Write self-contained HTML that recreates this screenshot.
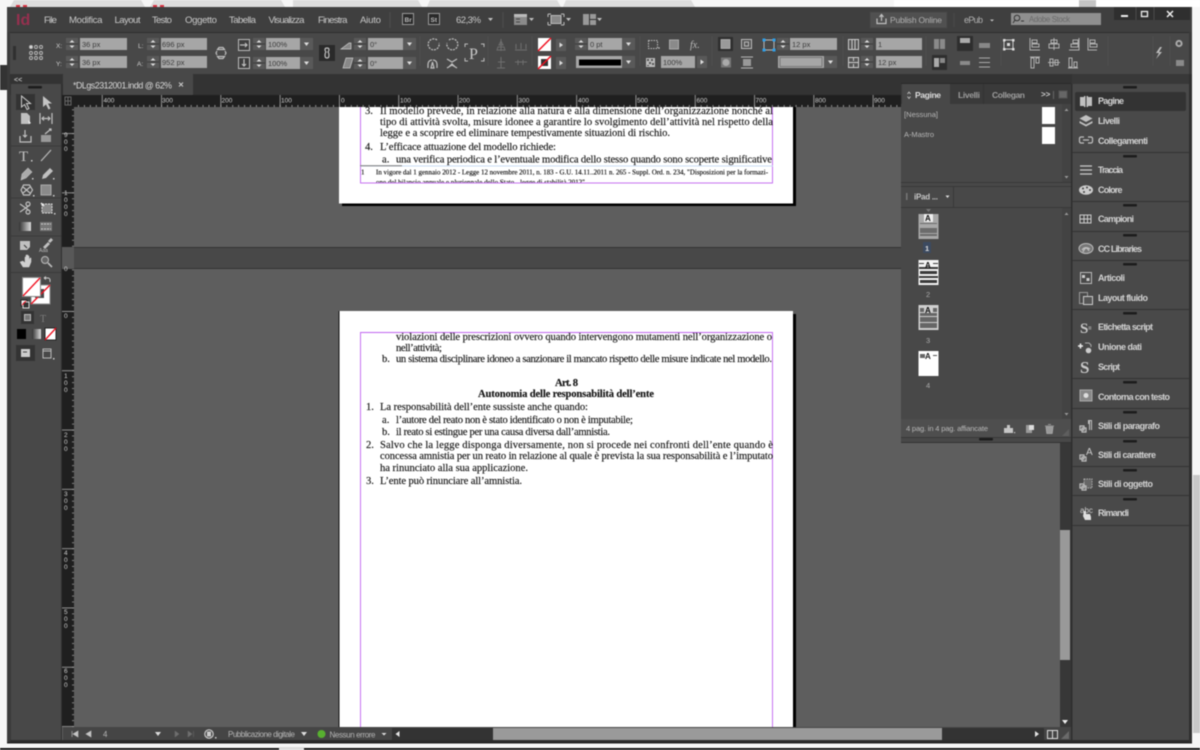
<!DOCTYPE html>
<html lang="it"><head><meta charset="utf-8"><title>InDesign</title>
<style>
html,body{margin:0;padding:0;background:#f6f6f6;width:1200px;height:750px;overflow:hidden}
svg{display:block}
#root{filter:blur(.4px)}
text{font-family:"Liberation Sans",sans-serif;white-space:pre}
.m{font-size:9.6px;fill:#c8c8c8}
.c{font-size:7.5px;fill:#3c3c3c}
.d{font-size:9px;fill:#d2d2d2;font-weight:bold}
.r{font-size:6.5px;fill:#cfcfcf}
.s{font-size:8px;fill:#b4b4b4}
.p{font-family:"Liberation Serif",serif;font-size:10.6px;fill:#141414;stroke:#141414;stroke-width:.14}
.b{font-weight:bold}
.f{font-family:"Liberation Serif",serif;font-size:6.9px;fill:#000;stroke:#000;stroke-width:.12}
.i{fill:none;stroke:#c0c0c0;stroke-width:1.2}
.j{fill:#c0c0c0}
</style></head><body>
<svg id="root" width="1200" height="750" viewBox="0 0 1200 750" xmlns="http://www.w3.org/2000/svg">
<defs>
<g id="sp"><rect width="12" height="12" fill="#595959"/><path d="M0 6h12" stroke="#3c3c3c"/><path d="M3.500 4.500L6 2l2.500 2.500zM3.500 7.500L6 10l2.500-2.500z" fill="#ddd"/></g>
<g id="dr"><rect width="13" height="12" fill="#595959"/><path d="M4 4.500h5L6.500 8z" fill="#ddd"/></g>
<g id="ar"><rect width="10" height="12" fill="#595959"/><path d="M3.500 3.500L7 6 3.500 8.500z" fill="#ddd"/></g>
<g id="gr"><rect width="14" height="2.500" rx="1" fill="#1c1c1c"/></g>
<pattern id="hr" x="339" y="95" width="5.930" height="12" patternUnits="userSpaceOnUse"><rect x="0" y="10" width=".8" height="2" fill="#aaa"/></pattern>
<pattern id="hR" x="339" y="95" width="59.300" height="12" patternUnits="userSpaceOnUse"><rect x="0" y="0" width=".8" height="12" fill="#aaa"/></pattern>
<pattern id="vr" x="62" y="311" width="12" height="5.930" patternUnits="userSpaceOnUse"><rect x="10" y="0" width="2" height=".8" fill="#999"/></pattern>
<pattern id="vR" x="62" y="311" width="12" height="59.300" patternUnits="userSpaceOnUse"><rect x="0" y="0" width="12" height=".8" fill="#aaa"/></pattern>
<linearGradient id="g1"><stop offset="0" stop-color="#333"/><stop offset="1" stop-color="#ddd"/></linearGradient>
</defs>

<!-- outside -->
<rect width="1200" height="750" fill="#f6f6f6"/>
<rect x="894" y="0" width="306" height="7" fill="#fff"/>
<path d="M10 7l4-7h127l4 7zM150 7l4-7h127l4 7zM293 7l0-7h125l4 7zM427 7l3-7h127l4 7zM563 7l3-7h125l4 7z" fill="#dcdcdc"/>
<path d="M16 5h4v2h-4zM23 5h4v2h-4zM153 5h4v2h-4zM160 5h4v2h-4z" fill="#d83040"/>
<rect x="1079" y="0" width="17" height="7" fill="#c4c4c4"/>
<rect x="0" y="65" width="7" height="25" fill="#333"/>
<rect x="1193" y="475" width="7" height="258" fill="#c8c8c8"/>
<rect x="0" y="748" width="1200" height="2" fill="#111"/>
<rect x="279" y="747" width="25" height="3" fill="#ddd"/>

<!-- window -->
<rect x="7" y="7" width="1185" height="736" fill="#3a3a3a"/>
<rect x="7" y="742" width="1185" height="1.500" fill="#222"/>
<rect x="7" y="7" width="1185" height="25" fill="#3f3f3f"/>
<rect x="10" y="32" width="1179" height="42" fill="#484848"/>
<rect x="10" y="32" width="1179" height="1" fill="#2e2e2e"/>
<rect x="10" y="74" width="1179" height="21" fill="#333"/>

<!-- menu -->
<text x="16" y="25" style="font-size:16px;fill:#96304f;font-weight:bold">Id</text>
<text class="m" x="44" y="23" textLength="13">File</text>
<text class="m" x="69" y="23" textLength="33.500">Modifica</text>
<text class="m" x="114.500" y="23" textLength="26">Layout</text>
<text class="m" x="152" y="23" textLength="20">Testo</text>
<text class="m" x="185" y="23" textLength="32">Oggetto</text>
<text class="m" x="229" y="23" textLength="27">Tabella</text>
<text class="m" x="268.500" y="23" textLength="36">Visualizza</text>
<text class="m" x="318" y="23" textLength="29.500">Finestra</text>
<text class="m" x="360" y="23" textLength="21">Aiuto</text>
<path d="M390 12v16" stroke="#4e4e4e"/>
<rect x="402.500" y="13.500" width="11" height="11" fill="#2a2a2a" stroke="#999"/>
<text x="404.500" y="22" style="font-size:6.500px;fill:#bbb;font-weight:bold">Br</text>
<rect x="428.500" y="13.500" width="11" height="11" fill="#2a2a2a" stroke="#999"/>
<text x="430.500" y="22" style="font-size:6.500px;fill:#bbb;font-weight:bold">St</text>
<text class="m" x="456" y="23" textLength="25">62,3%</text>
<path d="M488 18h5l-2.500 3z" class="j"/>
<path d="M503 12v16" stroke="#4e4e4e"/>
<rect x="514" y="14" width="13" height="11" fill="#8a8a8a"/><rect x="514" y="14" width="13" height="3" fill="#bbb"/><path d="M516 19h4M516 22h4" stroke="#444"/>
<path d="M529 18h5l-2.500 3z" class="j"/>
<rect x="551" y="15.500" width="10" height="8" fill="#888" stroke="#bbb"/><path d="M548 14h3M548 14v3M564 14h-3M564 14v3M548 25h3M548 25v-3M564 25h-3M564 25v-3" stroke="#bbb"/>
<path d="M566 18h5l-2.500 3z" class="j"/>
<rect x="583" y="14" width="13" height="11" fill="#999"/><path d="M589.500 14v11M589.500 19.500h7" stroke="#333"/>
<path d="M597 18h5l-2.500 3z" class="j"/>
<rect x="870" y="12" width="77" height="16" fill="#505050" stroke="#444"/>
<path d="M877 18.500v5h9v-5M881.500 21v-6M879.500 17l2-2.500 2 2.500" class="i" stroke-width="1"/>
<text x="890" y="23" style="font-size:8.500px;fill:#b0b0b0" textLength="52">Publish Online</text>
<path d="M954 13v14" stroke="#4a4a4a"/>
<text x="964" y="23" style="font-size:9px;fill:#b0b0b0" textLength="19">ePub</text>
<path d="M990 19.500h4l-2 2z" class="j"/>
<rect x="1011" y="13" width="90" height="12" fill="#8f8f8f"/>
<circle cx="1017" cy="18" r="2.800" fill="none" stroke="#333"/><path d="M1015 20l-2 3M1021 21h3" stroke="#333"/>
<text x="1029" y="22" style="font-size:7.800px;fill:#6a6a6a" textLength="41">Adobe Stock</text>
<!-- window buttons -->
<rect x="1114" y="7" width="76" height="13" fill="#2f2f2f"/>
<path d="M1136 7v13M1154 7v13" stroke="#4a4a4a"/>
<rect x="1121" y="15" width="7" height="2" fill="#eee"/>
<rect x="1141.500" y="11.500" width="6" height="5" fill="none" stroke="#eee" stroke-width="1.300"/>
<path d="M1167 11l6 6M1173 11l-6 6" stroke="#eee" stroke-width="1.500"/>

<!-- control panel -->
<rect x="13" y="46" width="3" height="14" fill="#303030"/>
<g fill="none" stroke="#bdbdbd" stroke-width=".9"><circle cx="31" cy="47" r="1.500" fill="#ddd"/><circle cx="36" cy="47" r="1.500"/><circle cx="41" cy="47" r="1.500"/><circle cx="31" cy="53" r="1.500"/><circle cx="36" cy="53" r="1.500"/><circle cx="41" cy="53" r="1.500"/><circle cx="31" cy="58" r="1.500"/><circle cx="36" cy="58" r="1.500"/><circle cx="41" cy="58" r="1.500"/></g>
<g fill="#a6a6a6">
<rect x="80" y="38" width="47" height="12"/><rect x="80" y="56" width="47" height="12"/>
<rect x="161" y="38" width="46" height="12"/><rect x="161" y="56" width="46" height="12"/>
<rect x="266" y="38" width="34" height="12"/><rect x="266" y="57" width="34" height="12"/>
<rect x="368" y="38" width="35" height="12"/><rect x="368" y="57" width="35" height="12"/>
<rect x="588" y="38" width="34" height="12"/>
<rect x="661" y="56" width="34" height="12"/>
<rect x="790" y="38" width="47" height="12"/><rect x="778" y="56" width="46" height="12"/>
<rect x="876" y="38" width="46" height="12"/><rect x="876" y="56" width="46" height="12"/>
</g>
<text class="c" x="82" y="47">36 px</text><text class="c" x="82" y="65">36 px</text>
<text class="c" x="162" y="47">696 px</text><text class="c" x="162" y="65">952 px</text>
<text class="c" x="268" y="47">100%</text><text class="c" x="268" y="66">100%</text>
<text class="c" x="370" y="47">0°</text><text class="c" x="370" y="66">0°</text>
<text class="c" x="590" y="47">0 pt</text>
<text class="c" x="663" y="65">100%</text>
<text class="c" x="792" y="47">12 px</text>
<text class="c" x="878" y="47">1</text><text class="c" x="878" y="65">12 px</text>
<text class="r" x="56" y="48">X:</text><text class="r" x="56" y="66">Y:</text><text class="r" x="138" y="48">L:</text><text class="r" x="137" y="66">A:</text>
<use href="#sp" x="66" y="38"/><use href="#sp" x="66" y="56"/><use href="#sp" x="147" y="38"/><use href="#sp" x="147" y="56"/>
<use href="#sp" x="253" y="38"/><use href="#sp" x="253" y="57"/><use href="#sp" x="354" y="38"/><use href="#sp" x="354" y="57"/>
<use href="#sp" x="575" y="38"/><use href="#sp" x="777" y="38"/><use href="#sp" x="861" y="38"/><use href="#sp" x="861" y="56"/>
<use href="#dr" x="300" y="38"/><use href="#dr" x="300" y="57"/><use href="#dr" x="403" y="38"/><use href="#dr" x="403" y="57"/>
<use href="#dr" x="622" y="38"/><use href="#dr" x="622" y="56"/><use href="#dr" x="824" y="56"/>
<use href="#ar" x="556" y="39"/><use href="#ar" x="556" y="57"/><use href="#ar" x="697" y="56"/>
<!-- chain -->
<path d="M219 47.500h4l1.500 2h-7zM217 51l-1 2 1 2M225 51l1 2-1 2M217.500 56.500h7l-1.500 2h-4z" class="i" stroke-width="1"/>
<!-- scale icons -->
<rect x="238.500" y="39.500" width="11" height="11" fill="#3e3e3e" stroke="#bbb"/><path d="M240 45h7M245 43l2 2-2 2" class="i"/>
<rect x="238.500" y="57.500" width="11" height="11" fill="#3e3e3e" stroke="#bbb"/><path d="M244 59v7M242 64l2 2 2-2" class="i"/>
<rect x="319" y="45" width="16" height="16" fill="#2a2a2a"/><path d="M327 48c-3 0-2 3-1 4-1 1-2 6 1 6s2-5 1-6c1-1 2-4-1-4z" class="i"/>
<path d="M341 49l8-6h2v6z" fill="#888" stroke="#ccc" stroke-width=".7"/>
<path d="M343 68l3-10h7l-3 10z" fill="#888" stroke="#ccc" stroke-width=".7"/>
<!-- rotate -->
<path d="M437 40a5.500 5.500 0 1 0 2 3" class="i" stroke-dasharray="2 1"/>
<path d="M449 40a5.500 5.500 0 1 1-2 3" class="i" stroke-dasharray="2 1"/>
<path d="M428 68v-4a4 4 0 0 1 4-4M437 68v-4a4 4 0 0 0-4-4M431 68l1.500-6 1.500 6z" class="i" fill="#bbb"/>
<path d="M447 59l5 3 5-3M447 68l5-3 5 3" class="i"/><path d="M449 66h6l-3-3z" class="j"/>
<text x="469" y="59" style="font-family:'Liberation Serif',serif;font-size:16px;fill:#c8c8c8">P</text>
<path d="M465 47v-3h3M484 47v-3h-3M465 58v3h3M484 58v3h-3" stroke="#bbb" fill="none"/>
<g fill="none" stroke="#6e6e6e"><path d="M501 39v12M497 50h8l-1-3h-6zM499 45h4l-2-4zM515 50h12M516 44v5M521 43v6M526 44v5M497 68h8M501 57v11M498 62h7M515 62h12M518 60v5M523 60v5"/></g>
<!-- fill stroke -->
<rect x="538" y="38" width="13" height="13" fill="#fff"/><path d="M538 51l13-13" stroke="#f01020" stroke-width="1.500"/>
<rect x="538" y="56" width="13" height="13" fill="#fff"/><rect x="541" y="59" width="7" height="7" fill="#333"/><path d="M538 69l13-13" stroke="#f01020" stroke-width="1.500"/>
<rect x="576" y="56" width="46" height="12" fill="#a6a6a6"/><rect x="579" y="59.500" width="42" height="6" fill="#000"/>
<rect x="648.500" y="40.500" width="9" height="8" fill="none" stroke="#bbb" stroke-dasharray="1.500 1"/><circle cx="659" cy="48" r=".8" fill="#ccc"/>
<rect x="669.500" y="40" width="9" height="9" fill="#8a8a8a" stroke="#aaa"/>
<text x="690" y="48" style="font-family:'Liberation Serif',serif;font-style:italic;font-size:10px;fill:#bbb">fx.</text>
<rect x="646" y="58" width="9" height="9" fill="#bbb"/><path d="M647 59h2v2h-2zM651 59h2v2h-2zM649 62h2v2h-2zM647 65h2v1h-2zM652 63h2v2h-2z" fill="#555"/>
<rect x="718" y="37" width="15" height="14" fill="#2e2e2e"/><rect x="721" y="39.500" width="9" height="9" fill="#9a9a9a" stroke="#bbb" stroke-width=".7"/>
<rect x="741.500" y="39.500" width="10" height="9" fill="#555" stroke="#bbb"/><rect x="744.500" y="42" width="4" height="4" fill="none" stroke="#bbb"/>
<rect x="721" y="57.500" width="10" height="10" fill="#777"/><circle cx="726" cy="62.500" r="3.500" fill="#aaa"/>
<rect x="743" y="59" width="8" height="7" fill="#999"/><path d="M741 57h12M741 68h12" stroke="#bbb"/>
<path d="M764 40h10v10h-10z" fill="none" stroke="#bbb"/><g fill="#2f9fe8"><rect x="762.500" y="38.500" width="3" height="3"/><rect x="772.500" y="38.500" width="3" height="3"/><rect x="762.500" y="48.500" width="3" height="3"/><rect x="772.500" y="48.500" width="3" height="3"/></g>
<rect x="780" y="57.500" width="42" height="9" fill="none" stroke="#777"/>
<!-- columns -->
<rect x="848.500" y="39.500" width="10" height="10" fill="#555" stroke="#ccc"/><path d="M852 40v9M855 40v9" stroke="#ccc"/>
<rect x="848.500" y="57.500" width="10" height="10" fill="#555" stroke="#ccc"/><path d="M849 62.500h9M853.500 58v3M853.500 64v3" stroke="#ccc"/>
<rect x="934" y="39" width="5" height="10" fill="#8a8a8a"/><rect x="940" y="39" width="5" height="10" fill="#8a8a8a"/>
<rect x="932" y="55" width="15" height="15" fill="#2e2e2e"/><rect x="934" y="58" width="5" height="9" fill="#aaa"/><rect x="940" y="58" width="5" height="5" fill="#888"/>
<rect x="957" y="36" width="16" height="15" fill="#2e2e2e"/><rect x="960" y="38" width="10" height="5" fill="#aaa"/>
<rect x="979" y="43" width="11" height="5" fill="#888"/><rect x="960" y="61" width="10" height="4" fill="#8a8a8a"/>
<path d="M979 58h11M979 62.500h11M979 67h11" stroke="#aaa"/>
<rect x="1004" y="40" width="9" height="9" fill="none" stroke="#ccc"/><g fill="#ddd"><rect x="1003" y="39" width="2.500" height="2.500"/><rect x="1012" y="39" width="2.500" height="2.500"/><rect x="1003" y="48" width="2.500" height="2.500"/><rect x="1012" y="48" width="2.500" height="2.500"/><rect x="1007" y="43" width="3" height="3"/></g>
<g fill="none" stroke="#b0b0b0"><path d="M1030 38v12h10M1032 40h5v3h-5zM1032 44h7v3h-7zM1054 38v12M1051 40h6v3h-6zM1049 44h10v4h-10zM1079 38v12h-10M1073 40h5v3h-5zM1071 44h7v3h-7zM1088 38v12h9M1090 40h5v3h-5zM1090 44h7v3h-7z"/><path d="M1030 57h10M1031 58v10h3v-10zM1036 58v5h3v-5zM1048 62.500h12M1050 59h3v7h-3zM1055 60h3v5h-3zM1068 68h10M1069 58h3v9h-3zM1074 62h3v5h-3z"/></g>
<path d="M1160 47l-4 6h3l-3 6 6-7h-3l3-5z" fill="#bbb"/>
<circle cx="1179" cy="43.500" r="2.600" fill="none" stroke="#aaa" stroke-width="2"/>
<rect x="1176" y="60" width="8" height="6" fill="#8a8a8a"/>
<path d="M1170 36v30M1153 36v30M1108 36v30M1001 36v30M926 36v30M843 36v30M712 36v30M640 36v30M532 36v30M488 36v30M420 36v30" stroke="#4f4f4f"/>

<!-- collapse bar / tab -->
<text x="14" y="82" style="font-size:7px;fill:#bbb;font-weight:bold">&lt;&lt;</text>
<text x="1180" y="82" style="font-size:7px;fill:#bbb;font-weight:bold">&lt;&lt;</text>
<rect x="63" y="74" width="130" height="21" fill="#484848"/>
<text x="73" y="88.500" style="font-size:8.800px;fill:#d8d8d8" textLength="99">*DLgs2312001.indd @ 62%</text>
<path d="M179 82.500l4 4M183 82.500l-4 4" stroke="#ccc"/>

<!-- toolbar -->
<rect x="11" y="84" width="50" height="656" fill="#484848"/>
<rect x="61" y="84" width="2" height="656" fill="#303030"/>
<use href="#gr" x="28" y="86"/>
<path d="M11 146h50M11 198h50M11 236h50M11 272.500h50" stroke="#3a3a3a"/>
<rect x="16" y="94" width="19" height="16" fill="#333"/>
<path d="M21.500 96v11l3-2.500 2.500 5 2-1-2.500-5h4z" fill="none" stroke="#ccc"/>
<path d="M43 96v11l3-2.500 2.500 5 2-1-2.500-5h4z" fill="#c4c4c4"/>
<path d="M21 113h6l3 3v8h-9z" class="j"/><path d="M28 120l3 3-2 1z" fill="#eee"/>
<path d="M40 113v11M52 113v11M42 118.500h8M44 116.500l-2 2 2 2M48 116.500l2 2-2 2" class="i"/>
<path d="M20 136v6h11v-6M25 130v7M23 135l2 2 2-2" class="i"/><path d="M41 135h10v7H41z" fill="#999"/><path d="M45 134l6-5M49 129h2v2" class="i"/>
<text x="19" y="161" style="font-family:'Liberation Serif',serif;font-size:15px;fill:#c4c4c4">T</text>
<rect x="31" y="160" width="1.500" height="1.500" fill="#ccc"/>
<path d="M41 161l10-11" stroke="#bbb" stroke-width="1.200"/>
<path d="M21 180l1-6 6-6 4 4-6 6zM21 180l4-4" fill="#aaa" stroke="#bbb" stroke-width=".6"/><rect x="32" y="178" width="1.500" height="1.500" fill="#ccc"/>
<path d="M42 179l1-4 7-7 3 3-7 7z" class="j"/><rect x="53" y="178" width="1.500" height="1.500" fill="#ccc"/>
<path d="M21 190l2.500-5h6l3 5-3 5h-6zM23 187l7 6M30 187l-7 6" class="i"/><rect x="33" y="195" width="1.500" height="1.500" fill="#ccc"/>
<rect x="41" y="185" width="10" height="10" fill="#8a8a8a" stroke="#aaa"/><rect x="53" y="195" width="1.500" height="1.500" fill="#ccc"/>
<path d="M20 204l10 7M20 212l10-7" class="i"/><circle cx="28" cy="204" r="2" class="i"/><circle cx="28" cy="212" r="2" class="i"/>
<rect x="42" y="204" width="10" height="9" fill="#888" stroke="#ddd" stroke-dasharray="2 1"/><path d="M41 203l3 3" stroke="#eee" stroke-width="1.500"/><rect x="54" y="213" width="1.500" height="1.500" fill="#ccc"/>
<rect x="19" y="222" width="12" height="9" fill="url(#g1)"/>
<rect x="40" y="222" width="12" height="9" fill="#777"/><path d="M41 224h10M41 229h10" stroke="#ccc" stroke-dasharray="2 1"/>
<path d="M20 241h10v6l-3 3h-7z" class="j"/><path d="M24 245l3 3" stroke="#333"/>
<path d="M43 247l5-5 2 2-5 5zM48 241l3-3 2 2-3 3z" class="j"/><text x="39" y="252" style="font-size:5px;fill:#bbb">Aaa</text>
<path d="M20 262l3 5h6l2-5v-4l-1 0-1 3v-5h-1v4v-5h-1v5v-5h-1v5v-3h-1v6l-2-2z" fill="#d0d0d0" stroke="#d0d0d0" stroke-width=".5"/>
<circle cx="45" cy="260" r="3.500" fill="#666" stroke="#bbb"/><path d="M48 263l4 4" stroke="#bbb" stroke-width="1.600"/>
<!-- fill/stroke tool -->
<rect x="31" y="285" width="19" height="19" fill="#fff" stroke="#888"/><rect x="35" y="289" width="9" height="9" fill="#484848"/><path d="M31 304l19-19" stroke="#f01020" stroke-width="1.300"/>
<rect x="22.500" y="277.500" width="18" height="19" fill="#fff" stroke="#888"/><path d="M23 296l17-18" stroke="#f01020" stroke-width="1.300"/>
<path d="M44 278h4a2 2 0 0 1 2 2v2M44 278l2-1.500M44 278l2 1.500" stroke="#ccc" fill="none"/>
<rect x="21" y="300" width="6" height="6" fill="#fff" stroke="#222"/><rect x="23" y="302" width="6" height="6" fill="#333" stroke="#ddd"/><path d="M22 305l4-4" stroke="#f01020"/>
<rect x="21" y="311" width="13" height="13" fill="#333"/><rect x="24.500" y="314.500" width="6" height="6" fill="#777" stroke="#bbb"/>
<text x="40" y="322" style="font-family:'Liberation Serif',serif;font-size:10px;fill:#7d7d7d">T</text>
<rect x="17" y="329" width="9" height="10" fill="#000"/>
<rect x="32" y="329" width="9" height="10" fill="url(#g1)"/>
<rect x="45" y="328" width="11" height="12" fill="#fff" stroke="#222"/><path d="M45 340l11-12" stroke="#f01020" stroke-width="1.300"/>
<rect x="16" y="345" width="19" height="16" fill="#333"/><rect x="21" y="349" width="9" height="8" fill="#ccc"/><path d="M23 352h4" stroke="#444"/>
<rect x="43" y="349" width="8" height="9" fill="none" stroke="#bbb"/><path d="M43 351h8" stroke="#bbb"/><rect x="53" y="358" width="1.500" height="1.500" fill="#ccc"/>

<!-- canvas -->
<rect x="62" y="95" width="1009" height="645" fill="#5e5e5e"/>
<rect x="74" y="247" width="986" height="22" fill="#484848"/>
<path d="M74 247.500h986M74 268.500h986" stroke="#333"/>

<!-- page 1 -->
<rect x="342" y="107" width="454" height="99" fill="#000"/>
<rect x="339" y="100" width="454" height="103.500" fill="#fff"/>
<!-- page 2 -->
<rect x="342" y="314" width="454" height="420" fill="#000"/>
<rect x="339" y="311" width="454" height="420" fill="#fff"/>
<path d="M339 311v420" stroke="#111"/>
<rect x="360.500" y="100" width="412" height="83" fill="none" stroke="#c064f0" stroke-width=".9"/>
<path d="M360 166h413" stroke="#c8dcf4"/><path d="M360 165.800h42" stroke="#777"/>
<path d="M360.500 730V332.500H772.500V730" fill="none" stroke="#c064f0" stroke-width=".9"/>

<text class="p" x="365" y="114">3.</text>
<text class="p" x="380" y="114" textLength="393">Il modello prevede, in relazione alla natura e alla dimensione dell’organizzazione nonché al</text>
<text class="p" x="380" y="125" textLength="393">tipo di attività svolta, misure idonee a garantire lo svolgimento dell’attività nel rispetto della</text>
<text class="p" x="380" y="136" textLength="290">legge e a scoprire ed eliminare tempestivamente situazioni di rischio.</text>
<text class="p" x="365" y="150">4.</text>
<text class="p" x="380" y="150" textLength="176">L’efficace attuazione del modello richiede:</text>
<text class="p" x="382" y="162.500">a.</text>
<text class="p" x="396" y="162.500" textLength="376">una verifica periodica e l’eventuale modifica dello stesso quando sono scoperte significative</text>
<text class="f" x="361" y="174.500">1</text>
<text class="f" x="376" y="174.500" textLength="392">In vigore dal 1 gennaio 2012 - Legge 12 novembre 2011, n. 183 - G.U. 14.11..2011 n. 265 - Suppl. Ord. n. 234, "Disposizioni per la formazi-</text>
<svg x="360" y="176" width="413" height="6.500"><text class="f" x="16" y="8.500" textLength="209">one del bilancio annuale e pluriennale dello Stato - legge di stabilità 2012"</text></svg>

<text class="p" x="396" y="340" textLength="376">violazioni delle prescrizioni ovvero quando intervengono mutamenti nell’organizzazione o</text>
<text class="p" x="396" y="351" textLength="46">nell’attività;</text>
<text class="p" x="382" y="362">b.</text>
<text class="p" x="396" y="362" textLength="376">un sistema disciplinare idoneo a sanzionare il mancato rispetto delle misure indicate nel modello.</text>
<text class="p b" x="555" y="386" textLength="23">Art. 8</text>
<text class="p b" x="478" y="397" textLength="176">Autonomia delle responsabilità dell’ente</text>
<text class="p" x="366" y="410">1.</text>
<text class="p" x="380" y="410" textLength="208">La responsabilità dell’ente sussiste anche quando:</text>
<text class="p" x="382" y="423">a.</text>
<text class="p" x="396" y="423" textLength="237">l’autore del reato non è stato identificato o non è imputabile;</text>
<text class="p" x="382" y="435">b.</text>
<text class="p" x="396" y="435" textLength="214">il reato si estingue per una causa diversa dall’amnistia.</text>
<text class="p" x="366" y="448">2.</text>
<text class="p" x="380" y="448" textLength="393">Salvo che la legge disponga diversamente, non si procede nei confronti dell’ente quando è</text>
<text class="p" x="380" y="459" textLength="393">concessa amnistia per un reato in relazione al quale è prevista la sua responsabilità e l’imputato</text>
<text class="p" x="380" y="471" textLength="148">ha rinunciato alla sua applicazione.</text>
<text class="p" x="366" y="484">3.</text>
<text class="p" x="380" y="484" textLength="142">L’ente può rinunciare all’amnistia.</text>

<!-- rulers -->
<rect x="62" y="95" width="1009" height="12" fill="#1f1f1f"/>
<rect x="74" y="95" width="827" height="12" fill="url(#hr)"/>
<rect x="74" y="95" width="827" height="12" fill="url(#hR)"/>
<path d="M65 97h6v8h-6zM65 101h6M68 97v8" stroke="#666" fill="none"/>
<text class="r" x="103.500" y="102.500">400</text><text class="r" x="162" y="102.500">300</text><text class="r" x="221.500" y="102.500">200</text><text class="r" x="281" y="102.500">100</text><text class="r" x="341" y="102.500">0</text><text class="r" x="400" y="102.500">100</text><text class="r" x="459" y="102.500">200</text><text class="r" x="518.500" y="102.500">300</text><text class="r" x="578" y="102.500">400</text><text class="r" x="637" y="102.500">500</text><text class="r" x="696.500" y="102.500">600</text><text class="r" x="755.500" y="102.500">700</text><text class="r" x="815" y="102.500">800</text><text class="r" x="874" y="102.500">900</text>
<rect x="62" y="107" width="12" height="620" fill="#1f1f1f"/>
<rect x="62" y="107" width="12" height="620" fill="url(#vr)"/>
<rect x="62" y="107" width="12" height="620" fill="url(#vR)"/>
<rect x="62" y="247" width="12" height="22" fill="#585858"/>
<text class="r" x="64" y="137">9</text><text class="r" x="64" y="144">0</text><text class="r" x="64" y="151">0</text>
<text class="r" x="64" y="195">1</text><text class="r" x="64" y="202">0</text><text class="r" x="64" y="209">0</text><text class="r" x="64" y="216">0</text>
<text class="r" x="64" y="271">0</text><text class="r" x="64" y="318">0</text>
<text class="r" x="64" y="378">1</text><text class="r" x="64" y="385">0</text><text class="r" x="64" y="392">0</text>
<text class="r" x="64" y="437">2</text><text class="r" x="64" y="444">0</text><text class="r" x="64" y="451">0</text>
<text class="r" x="64" y="496">3</text><text class="r" x="64" y="503">0</text><text class="r" x="64" y="510">0</text>
<text class="r" x="64" y="555">4</text><text class="r" x="64" y="562">0</text><text class="r" x="64" y="569">0</text>
<text class="r" x="64" y="614">5</text><text class="r" x="64" y="621">0</text><text class="r" x="64" y="628">0</text>
<text class="r" x="64" y="673">6</text><text class="r" x="64" y="680">0</text><text class="r" x="64" y="687">0</text>

<!-- vertical scrollbar -->
<rect x="1060" y="107" width="11" height="620" fill="#373737"/>
<rect x="1060" y="530" width="10" height="130" fill="#999"/>
<path d="M1062 720h6l-3 4z" fill="#eee"/>

<!-- status bar -->
<rect x="63" y="727" width="1008" height="13" fill="#454545"/>
<path d="M72 731v6M78 731l-5 3 5 3zM91 731l-5 3 5 3z" fill="#c4c4c4" stroke="#c4c4c4" stroke-width=".6"/>
<text class="s" x="103" y="737">4</text>
<path d="M155 732h6l-3 4z" fill="#ddd"/>
<path d="M175 731l4 3-4 3zM188 731l4 3-4 3zM193.500 731v6" fill="#6e6e6e" stroke="#6e6e6e" stroke-width=".5"/>
<circle cx="209" cy="734" r="4.200" fill="none" stroke="#ccc" stroke-width="1.200"/><rect x="207" y="731.500" width="4" height="5" fill="#ccc"/><rect x="215" y="737" width="1.500" height="1.500" fill="#ccc"/>
<text class="s" x="228" y="737" textLength="67">Pubblicazione digitale</text>
<path d="M301 732h6l-3 4z" fill="#ddd"/>
<circle cx="321.500" cy="734" r="4" fill="#58b030"/>
<text class="s" x="329.500" y="737.500" textLength="46">Nessun errore</text>
<path d="M381.500 733h5l-2.500 2.500z" fill="#ddd"/>
<rect x="392" y="728" width="652" height="12" fill="#333"/>
<path d="M399.500 731l-4 3 4 3z" fill="#e6e6e6"/>
<rect x="493" y="728" width="449" height="12" fill="#9a9a9a"/>
<path d="M1035 731l4 3-4 3z" fill="#e6e6e6"/>
<rect x="1047.500" y="730.500" width="10" height="8" fill="none" stroke="#ddd"/><path d="M1052.500 731v7" stroke="#ddd"/>
<path d="M1061 739l8-8v8z" fill="#6a6a6a"/>

<!-- dock -->
<rect x="1072" y="84" width="118" height="656" fill="#494949"/>
<rect x="1189" y="74" width="3" height="668" fill="#2f2f2f"/>
<rect x="1071" y="84" width="1.500" height="656" fill="#2e2e2e"/>
<rect x="1072" y="74" width="117" height="10" fill="#383838"/>
<path stroke="#333" d="M1072 152.500h117M1072 201.500h117M1072 231.500h117M1072 260.500h117M1072 309.500h117M1072 378.500h117M1072 408.500h117M1072 437.500h117M1072 466.500h117M1072 495.500h117M1072 525.500h117"/>
<use href="#gr" x="1123" y="86"/><use href="#gr" x="1123" y="155"/><use href="#gr" x="1123" y="204"/><use href="#gr" x="1123" y="234"/><use href="#gr" x="1123" y="263"/><use href="#gr" x="1123" y="312"/><use href="#gr" x="1123" y="381"/><use href="#gr" x="1123" y="411"/><use href="#gr" x="1123" y="440"/><use href="#gr" x="1123" y="469"/><use href="#gr" x="1123" y="498"/>
<rect x="1075" y="92" width="111" height="19" rx="2" fill="#333"/>
<text class="d" x="1098" y="104" textLength="26">Pagine</text>
<text class="d" x="1098" y="124" textLength="22">Livelli</text>
<text class="d" x="1098" y="144" textLength="50">Collegamenti</text>
<text class="d" x="1098" y="173" textLength="25">Traccia</text>
<text class="d" x="1098" y="193" textLength="24.500">Colore</text>
<text class="d" x="1098" y="222" textLength="36">Campioni</text>
<text class="d" x="1098" y="252" textLength="44">CC Libraries</text>
<text class="d" x="1098" y="281" textLength="27">Articoli</text>
<text class="d" x="1098" y="301" textLength="50">Layout fluido</text>
<text class="d" x="1098" y="330" textLength="55">Etichetta script</text>
<text class="d" x="1098" y="350" textLength="44">Unione dati</text>
<text class="d" x="1098" y="370" textLength="22">Script</text>
<text class="d" x="1098" y="400" textLength="72">Contorna con testo</text>
<text class="d" x="1098" y="429" textLength="62">Stili di paragrafo</text>
<text class="d" x="1098" y="458" textLength="58">Stili di carattere</text>
<text class="d" x="1098" y="487" textLength="55">Stili di oggetto</text>
<text class="d" x="1098" y="516" textLength="31">Rimandi</text>
<!-- dock icons -->
<path d="M1080 97h4v-1h1.500v11H1084v-1h-4zM1092 97h-4v-1h-1.500v11h1.500v-1h4z" class="j"/>
<path d="M1086 115l6.500 3.500-6.500 3.500-6.500-3.500zM1079.500 121l6.500 3.500 6.500-3.500v2l-6.500 3.500-6.500-3.500z" class="j"/>
<path d="M1084 137h-3a1.500 1.500 0 0 0-1.500 1.500v3a1.500 1.500 0 0 0 1.500 1.500h3M1088 137h3a1.500 1.500 0 0 1 1.500 1.500v3a1.500 1.500 0 0 1-1.500 1.500h-3M1083 140h6" class="i"/>
<path d="M1080 166h12M1080 170h12M1080 174h12" stroke="#ccc" stroke-width="1.300"/>
<ellipse cx="1086" cy="190" rx="7" ry="4.800" fill="#ccc"/><g fill="#444"><circle cx="1083" cy="188.500" r="1"/><circle cx="1087" cy="187.500" r="1"/><circle cx="1090" cy="190" r="1"/><circle cx="1084" cy="192" r="1"/></g>
<rect x="1080" y="215" width="11" height="8" fill="none" stroke="#ccc"/><path d="M1084 215v8M1087.500 215v8M1080 219h11" stroke="#ccc"/>
<ellipse cx="1086" cy="248.500" rx="7" ry="5" fill="#777" stroke="#bbb"/><path d="M1082 250c2-3 5-3 8-1M1083 252c2-5 4-5 6-1" class="i" stroke-width=".7"/>
<rect x="1080.500" y="272.500" width="11" height="11" fill="none" stroke="#bbb"/><rect x="1082" y="275" width="3" height="3" fill="#ccc"/><rect x="1086.500" y="278" width="3" height="3" fill="#ccc"/>
<rect x="1079.500" y="292.500" width="8" height="11" fill="none" stroke="#999"/><rect x="1083.500" y="296.500" width="9" height="8" fill="#555" stroke="#ccc"/>
<text x="1080" y="333" style="font-family:'Liberation Serif',serif;font-size:15px;font-weight:bold;fill:#c8c8c8">S</text><text x="1088" y="330" style="font-size:6px;fill:#ccc">≡</text>
<path d="M1078 346h5M1080.500 343.500v5" stroke="#eee" stroke-width="1.500"/><circle cx="1088.500" cy="350.500" r="2.800" fill="#ccc"/><path d="M1085 343h4l2 2v2" stroke="#aaa" fill="none"/>
<text x="1080" y="373" style="font-family:'Liberation Serif',serif;font-size:17px;font-weight:bold;fill:#c8c8c8">S</text>
<rect x="1080" y="390" width="12" height="11" fill="#888" stroke="#aaa"/><circle cx="1086" cy="395.500" r="2.500" fill="#ddd"/>
<path d="M1080 426h4v4h-4zM1082 428h4v4h-4z" class="i"/><path d="M1088 420h4v10h-1v-9h-1v9h-1v-6h-1z" class="j"/>
<path d="M1080 455h4v4h-4zM1082 457h4v4h-4z" class="i"/><text x="1086" y="455" style="font-size:10px;fill:#ccc">A</text>
<rect x="1084" y="479" width="8" height="9" fill="#666" stroke="#aaa" stroke-dasharray="1.500 1"/><path d="M1080 484h4v4h-4zM1082 486h4v4h-4z" class="i"/>
<text x="1080" y="513" style="font-size:8px;fill:#ccc">abc</text><path d="M1084 511l2 0 0 3 4 0 1 3v3h-6l-2-4z" fill="#e0e0e0"/>

<!-- pages panel -->
<rect x="901" y="83" width="170" height="359" fill="#484848"/>
<rect x="901" y="83" width="170" height="1.500" fill="#2a2a2a"/>
<rect x="901" y="84" width="170" height="20" fill="#3a3a3a"/>
<rect x="902" y="84" width="48" height="20" fill="#484848"/>
<path d="M907.500 94l1.500-2 1.500 2M907.500 96.500l1.500 2 1.500-2" stroke="#ccc" fill="none" stroke-width=".8"/>
<text x="915" y="98" style="font-size:8.500px;fill:#ddd;font-weight:bold" textLength="26">Pagine</text>
<text x="958" y="98" style="font-size:8.500px;fill:#9c9c9c;font-weight:bold" textLength="22">Livelli</text>
<text x="992" y="98" style="font-size:8.500px;fill:#9c9c9c;font-weight:bold" textLength="33">Collegan</text>
<path d="M983.500 84v20" stroke="#333"/>
<text x="1041" y="97" style="font-size:8px;fill:#ccc;font-weight:bold">&gt;&gt;</text>
<path d="M1053.500 91v8" stroke="#666"/>
<rect x="1059" y="91" width="8" height="7" fill="#666" stroke="#555"/>
<text x="904" y="117" style="font-size:7.500px;fill:#b6b6b6" textLength="34">[Nessuna]</text>
<text x="904" y="137" style="font-size:7.500px;fill:#b6b6b6" textLength="30">A-Mastro</text>
<rect x="1042" y="107" width="13" height="17" fill="#fff"/>
<rect x="1042" y="127" width="13" height="17" fill="#fff"/>
<rect x="1062" y="104" width="9" height="78" fill="#434343"/>
<path d="M1064.500 111l2-2.500 2 2.500zM1064.500 176l2 2.500 2-2.500z" fill="#999"/>
<path d="M901 182.500h170M901 186.500h170M901 207.500h170" stroke="#383838"/>
<rect x="906" y="193" width="1.500" height="7" fill="#777"/>
<text x="914" y="199.500" style="font-size:8px;fill:#c6c6c6;font-weight:bold" textLength="24">iPad ...</text>
<path d="M945.500 195.500h4l-2 2.500z" fill="#ddd"/>
<path d="M953.500 187v20" stroke="#383838"/>
<rect x="1062" y="208" width="9" height="211" fill="#434343"/>
<path d="M1064.500 215l2-2.500 2 2.500zM1064.500 413l2 2.500 2-2.500z" fill="#999"/>
<!-- thumbs -->
<path d="M926 209h5l-2.500 3z" fill="#777"/>
<rect x="918.500" y="214" width="20" height="25" fill="#a8a8a8"/>
<rect x="924" y="214" width="9" height="8" fill="#eee"/>
<text x="925" y="221" style="font-size:8px;font-weight:bold;fill:#111">A</text>
<g fill="#6c6c6c"><rect x="920" y="223" width="17" height="1"/><rect x="920" y="228" width="17" height="5"/><rect x="920" y="234" width="17" height="2"/></g>
<rect x="923" y="242" width="8" height="11" fill="#3c4a60"/>
<text x="925" y="251" style="font-size:7.500px;font-weight:bold;fill:#ddd">1</text>
<rect x="918.500" y="260" width="20" height="25" fill="#f4f4f4"/>
<g fill="#3a3a3a"><rect x="919" y="263" width="5" height="1"/><rect x="933" y="263" width="5" height="1"/><rect x="919" y="267" width="19" height="2"/><rect x="920" y="271" width="17" height="3"/><rect x="919" y="276" width="19" height="2"/><rect x="920" y="280" width="17" height="3"/></g>
<text x="925" y="268" style="font-size:8px;font-weight:bold;fill:#111">A</text>
<text x="926" y="297" style="font-size:7.500px;fill:#aaa">2</text>
<rect x="918.500" y="305" width="20" height="25" fill="#cfcfcf"/>
<g fill="#666"><rect x="920" y="313" width="17" height="3"/><rect x="920" y="317" width="17" height="5"/><rect x="920" y="323" width="17" height="5"/><rect x="920" y="308" width="4" height="4"/><rect x="933" y="308" width="4" height="4"/></g>
<text x="925" y="313" style="font-size:8px;font-weight:bold;fill:#111">A</text>
<text x="926" y="343" style="font-size:7.500px;fill:#aaa">3</text>
<rect x="918.500" y="351" width="20" height="25" fill="#fff"/>
<rect x="920" y="354" width="5" height="4" fill="#666"/><rect x="933" y="355" width="4" height="1" fill="#555"/>
<text x="925" y="359" style="font-size:8px;font-weight:bold;fill:#222">A</text>
<text x="926" y="388" style="font-size:7.500px;fill:#aaa">4</text>
<!-- panel footer -->
<rect x="901" y="419" width="170" height="18" fill="#4e4e4e"/>
<path d="M901 437.500h170" stroke="#383838"/>
<text x="906" y="431" style="font-size:7.500px;fill:#b8b8b8" textLength="82">4 pag. in 4 pag. affiancate</text>
<path d="M1004 428h3v-3h3v3h3v5h-9z" fill="#c6c6c6"/><rect x="1014" y="432" width="1.200" height="1.200" fill="#ccc"/>
<path d="M1026 425h6v8h-6z" fill="#9a9a9a"/><path d="M1029 425h5v5h-5z" fill="#ddd"/>
<path d="M1046 427h7l-.8 6.500h-5.400zM1045 426h9M1048 424.500h3" fill="#999" stroke="#aaa" stroke-width=".8"/>
<path d="M1062 436l7-7v7z" fill="#5e5e5e"/>
<use href="#gr" x="979" y="438"/>
<rect x="901" y="442" width="170" height="1" fill="#333"/>
<rect x="1060" y="443" width="11" height="87" fill="#373737"/>
<rect x="10" y="740" width="1179" height="2" fill="#2c2c2c"/>
</svg>
</body></html>
